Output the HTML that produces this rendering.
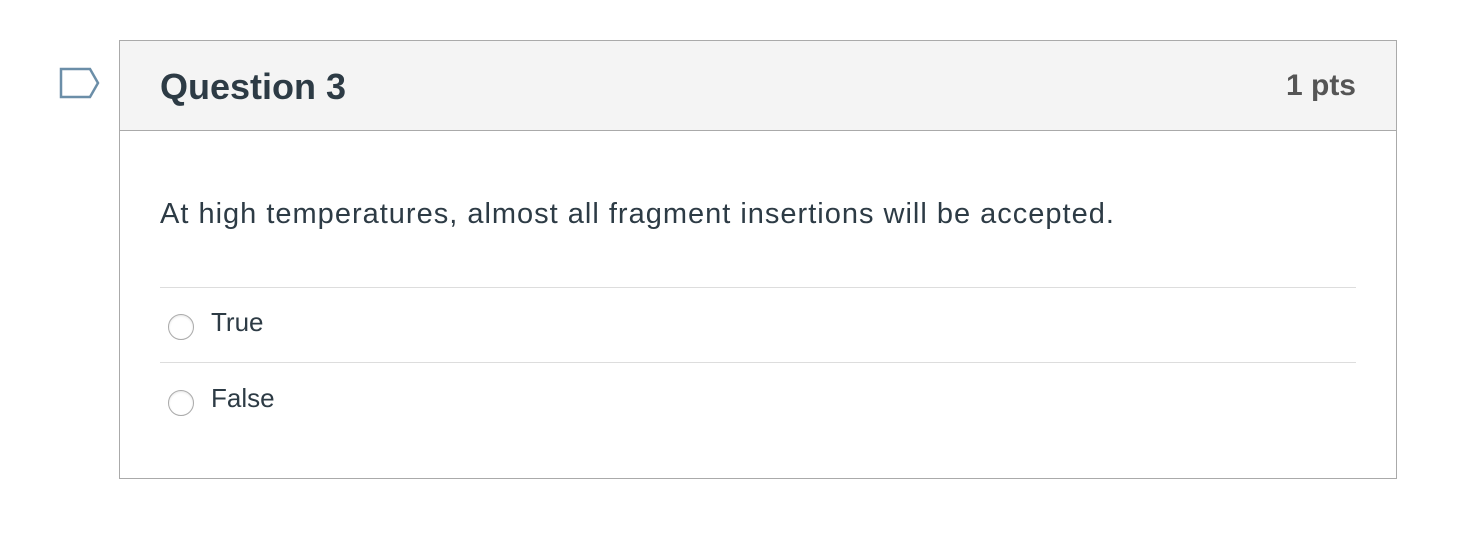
<!DOCTYPE html>
<html><head><style>
body{margin:0;width:1474px;height:552px;background:#fff;font-family:"Liberation Sans",sans-serif;position:relative;overflow:hidden}
.box{position:absolute;left:119px;top:40px;width:1276px;height:437px;border:1px solid #aaa;}
.hd{position:absolute;left:0;top:0;width:1276px;height:89px;background:#f4f4f4;border-bottom:1px solid #aaa}
.t{position:absolute;color:#2d3b45}
.line{position:absolute;left:40px;width:1196px;height:1px;background:#ddd}
.r{position:absolute;left:48px;width:24px;height:24px;border:1px solid #aaa;border-radius:50%;background:#fff;box-shadow:inset 0 1px 2px rgba(0,0,0,.1)}
</style></head><body>
<svg style="position:absolute;left:58px;top:66px" width="46" height="36"><path d="M3 3H32L40 17L32 31H3Z" fill="none" stroke="#6b8ea8" stroke-width="2.5"/></svg>
<div class="box">
<div class="hd">
<div class="t" style="left:40px;top:25px;font-size:36px;font-weight:bold">Question 3</div>
<div class="t" style="right:40px;top:28px;font-size:30px;font-weight:bold;color:#555">1 pts</div>
</div>
<div class="t" style="left:40px;top:157px;font-size:29px;letter-spacing:1px">At high temperatures, almost all fragment insertions will be accepted.</div>
<div class="line" style="top:246px"></div>
<div class="r" style="top:273px"></div>
<div class="t" style="left:91px;top:266px;font-size:26px">True</div>
<div class="line" style="top:321px"></div>
<div class="r" style="top:349px"></div>
<div class="t" style="left:91px;top:342px;font-size:26px">False</div>
</div>
</body></html>
